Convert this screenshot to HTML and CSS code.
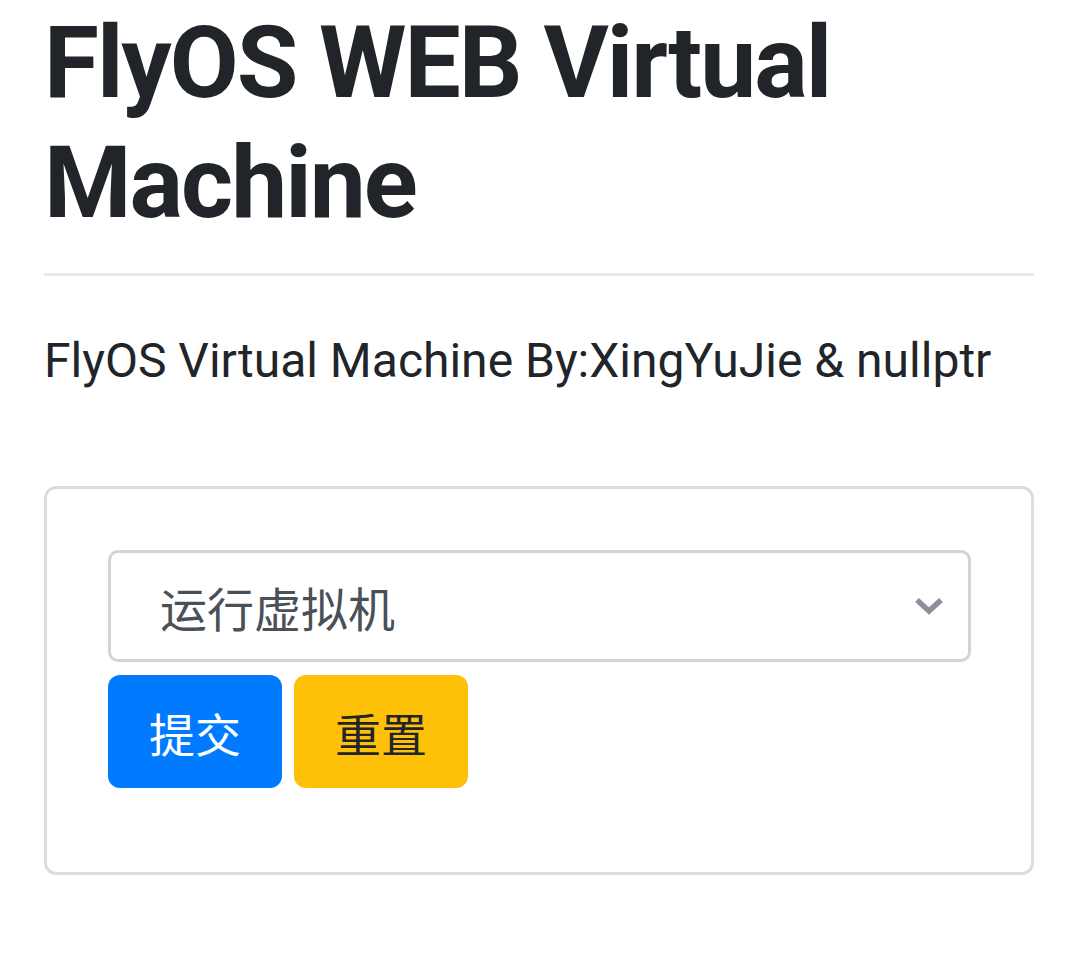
FILE: index.html
```html
<!DOCTYPE html>
<html lang="zh">
<head>
<meta charset="utf-8">
<title>FlyOS WEB Virtual Machine</title>
<link rel="stylesheet" href="styles.css">
</head>
<body>
<div class="container">
  <h1 class="title">FlyOS WEB Virtual Machine</h1>
  <hr class="divider">
  <p class="lead">FlyOS Virtual Machine By:XingYuJie &amp; nullptr</p>
  <div class="card">
    <form class="form">
      <div class="select">
        <span class="select-text">运行虚拟机</span>
        <svg class="chevron" width="30" height="20" viewBox="0 0 30 20"><path d="M3 4 L15 15 L27 4" fill="none" stroke="#8f8f9b" stroke-width="5.5"/></svg>
      </div>
      <div class="actions">
        <button type="button" class="btn btn-primary">提交</button>
        <button type="button" class="btn btn-warning">重置</button>
      </div>
    </form>
  </div>
</div>
</body>
</html>
```
FILE: styles.css
```css
* { box-sizing: border-box; }
html, body { margin: 0; padding: 0; background: #fff; }
body {
  font-family: Roboto, "Noto Sans CJK SC", sans-serif;
  color: #212529;
}
.container {
  padding: 3px 45px 0 44px;
}
.title {
  margin: 0;
  font-size: 100px;
  line-height: 120px;
  font-weight: 700;
  letter-spacing: -2px;
  color: #212529;
}
.divider {
  margin: 30px 0 0;
  border: 0;
  border-top: 3px solid #e9e9e9;
  height: 0;
}
.lead {
  margin: 49px 0 0;
  font-size: 48px;
  line-height: 72px;
  font-weight: 400;
  color: #212529;
}
.card {
  margin-top: 89px;
  border: 3px solid #dcdcdc;
  border-radius: 12px;
  height: 389px;
  padding: 61px 60px 0 61px;
}
.form {
  display: flex;
  flex-direction: column;
  gap: 13px;
}
.select {
  display: flex;
  align-items: center;
  justify-content: space-between;
  height: 112px;
  border: 3px solid #ced4da;
  border-radius: 10px;
  padding: 0 24px 0 49px;
}
.select-text {
  font-family: "Noto Sans CJK SC", sans-serif;
  font-size: 47px;
  color: #495057;
  line-height: 1;
}
.chevron { display: block; }
.actions {
  display: flex;
  gap: 12px;
}
.btn {
  width: 174px;
  height: 113px;
  border: 0;
  border-radius: 12px;
  padding: 0;
  font-family: "Noto Sans CJK SC", sans-serif;
  font-size: 46px;
  line-height: 1;
  cursor: pointer;
}
.btn-primary { background: #007bff; color: #fff; }
.btn-warning { background: #ffc107; color: #212529; }
```
